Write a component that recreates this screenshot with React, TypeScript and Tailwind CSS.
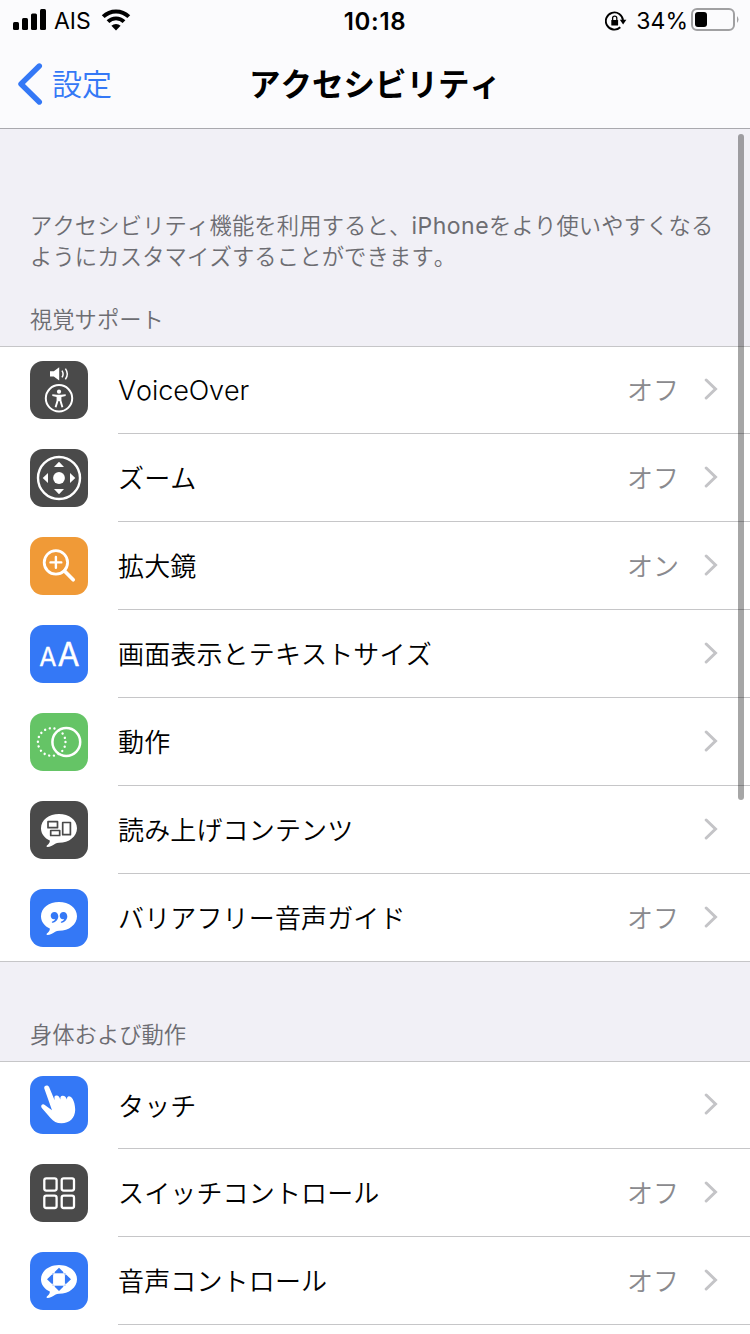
import type { ReactNode } from "react";

const BUBBLE =
  "M29 13C39 13 47 19 47 27.2S39 41.8 29 41.8C27.6 41.8 26.400 42 25.200 42.700C22.600 44.500 20 45.900 17.400 45.900C16.400 45.900 16.300 45.100 16.900 44.500C18.400 43 20.200 41.600 19.800 39.400C14.600 37.200 11 32.800 11 27.200C11 19 19 13 29 13Z";

const QUOTE =
  "M3.700 0C6.100 0 7.600 1.900 7.600 4.400C7.600 7.600 5.200 10.200 2 10.900C1 11.100 .8 10 1.700 9.600C3.200 9 4.200 8.100 4.500 7.100C1.900 7.900 0 6.100 0 3.800C0 1.600 1.700 0 3.700 0Z";

const icons: Record<string, ReactNode> = {
  voiceover: (
    <>
      <path d="M20 10.300h3.800l5.400-4v13.200l-5.400-4H20z" fill="#fff" />
      <path d="M32 9.600q2.200 3.400 0 6.800M35.400 7.600q3.800 5.400 0 10.800" stroke="#fff" strokeWidth="1.500" />
      <circle cx="29" cy="37.300" r="13.200" stroke="#fff" strokeWidth="2" />
      <circle cx="29" cy="30.700" r="2.100" fill="#fff" />
      <path d="M22.300 33.200l4.700.6h4l4.700-.6v1.900l-4.300.9v3.500l1.900 6.600-1.800.4-2-6.500h-1l-2 6.500-1.800-.4 1.900-6.600v-3.500l-4.300-.9z" fill="#fff" />
    </>
  ),
  zoom: (
    <>
      <circle cx="29" cy="29" r="21" stroke="#fff" strokeWidth="2.400" />
      <circle cx="29" cy="29" r="5.900" fill="#fff" />
      <path d="M29 12.700l5 5.300h-10zM29 45.300l5-5.300h-10zM12.700 29l5.300-5v10zM45.300 29l-5.300-5v10z" fill="#fff" />
    </>
  ),
  magnifier: (
    <g stroke="#fff" strokeLinecap="round">
      <circle cx="25.900" cy="25.400" r="11.700" strokeWidth="2.800" />
      <path d="M20.500 25.400h10.800M25.900 20v10.800" strokeWidth="2.400" />
      <path d="M34.500 34l8.700 8.700" strokeWidth="3.700" />
    </g>
  ),
  display: (
    <g fill="#fff" stroke="#fff" strokeWidth=".3" strokeLinejoin="round" fontFamily="Inter, sans-serif" fontWeight="400">
      <text x="9.300" y="40.800" fontSize="25">A</text>
      <text x="27.400" y="40.800" fontSize="32">A</text>
    </g>
  ),
  motion: (
    <>
      <circle cx="21.700" cy="29" r="13.800" stroke="#fff" strokeWidth="2.400" strokeLinecap="round" strokeDasharray="0.010 4.807" />
      <circle cx="36.300" cy="29" r="13.900" stroke="#fff" strokeWidth="2.500" />
    </>
  ),
  spoken: (
    <>
      <path d={BUBBLE} fill="#fff" />
      <g stroke="#4a4a4a" strokeWidth="1.700" strokeLinejoin="round">
        <rect x="18" y="20.700" width="9.500" height="6" />
        <rect x="20.700" y="29.500" width="9" height="5" />
        <rect x="32.700" y="21.500" width="7.700" height="12.200" />
      </g>
    </>
  ),
  audio: (
    <>
      <path d={BUBBLE} fill="#fff" />
      <g fill="#3478f6">
        <path d={QUOTE} transform="translate(20.700 22.900)" />
        <path d={QUOTE} transform="translate(29.700 22.900)" />
      </g>
    </>
  ),
  touch: (
    <path
      d="M14.300 12.500C13.400 9.300 18.100 8.200 19.200 11.200L24 22.800L24.600 24.200C24.400 21.400 24 19.800 26 19.600C28.400 19.300 29.300 20.600 30.300 23.400C30.300 21 30.700 19.800 32.500 19.700C35 19.600 35.900 21.300 37 23.500C37 21.700 37.200 20.500 38.700 20.200C43 19.600 45.300 28.500 45.200 34C45 42 39.500 47.300 31.500 47.300C26.500 47.300 23.500 45.600 20.500 42L11.600 31.700C10.200 29.600 12.600 27.200 14.800 28.900L22 34.200Z"
      fill="#fff"
    />
  ),
  switch: (
    <g stroke="#fff" strokeWidth="2.300">
      <rect x="14.300" y="14.300" width="12.300" height="12.300" rx="2" />
      <rect x="31.700" y="14.300" width="12.300" height="12.300" rx="2" />
      <rect x="14.300" y="31.700" width="12.300" height="12.300" rx="2" />
      <rect x="31.700" y="31.700" width="12.300" height="12.300" rx="2" />
    </g>
  ),
  voice: (
    <>
      <path d={BUBBLE} fill="#fff" />
      <path
        d="M29 15.700l4.300 4.200v1.300h2.100v2h-12.800v-2h2.100v-1.300zM29 39l4.300-4.200v-1.300h2.100v-1h-12.800v1h2.100v1.300zM17 27.300l4.700-4.500h1.600v9h-1.600zM41 27.300l-4.700-4.500h-1.600v9h1.600z"
        fill="#3478f6"
      />
      <rect x="23.300" y="21.300" width="11.400" height="12.400" fill="#fff" />
    </>
  ),
};

type Row = { icon: string; color: string; label: string; value?: string };

const vision: Row[] = [
  { icon: "voiceover", color: "bg-[#4a4a4a]", label: "VoiceOver", value: "オフ" },
  { icon: "zoom", color: "bg-[#4a4a4a]", label: "ズーム", value: "オフ" },
  { icon: "magnifier", color: "bg-[#f09a37]", label: "拡大鏡", value: "オン" },
  { icon: "display", color: "bg-[#3478f6]", label: "画面表示とテキストサイズ" },
  { icon: "motion", color: "bg-[#65c466]", label: "動作" },
  { icon: "spoken", color: "bg-[#4a4a4a]", label: "読み上げコンテンツ" },
  { icon: "audio", color: "bg-[#3478f6]", label: "バリアフリー音声ガイド", value: "オフ" },
];

const physical: Row[] = [
  { icon: "touch", color: "bg-[#3478f6]", label: "タッチ" },
  { icon: "switch", color: "bg-[#4a4a4a]", label: "スイッチコントロール", value: "オフ" },
  { icon: "voice", color: "bg-[#3478f6]", label: "音声コントロール", value: "オフ" },
];

function List({ rows, open }: { rows: Row[]; open?: boolean }) {
  return (
    <div className={`border-t border-[#c6c6c8] bg-white ${open ? "" : "border-b"}`}>
      {rows.map((row, i) => {
        const last = i === rows.length - 1 && !open;
        return (
          <div key={row.icon} className={`flex pl-[30px] ${i === 0 || last ? "h-[87px]" : "h-[88px]"}`}>
            <div className={`size-[58px] shrink-0 rounded-[13px] ${row.color} ${i === 0 ? "mt-[14px]" : "mt-[15px]"}`}>
              <svg viewBox="0 0 58 58" fill="none" className="size-full">
                {icons[row.icon]}
              </svg>
            </div>
            <div className={`ml-[30px] flex flex-1 items-center pr-[32px] ${last ? "" : "border-b border-[#c6c6c8]"}`}>
              <span
                className={`flex-1 whitespace-nowrap text-black ${
                  row.icon === "voiceover" ? "pt-[2px] text-[27px] tracking-[-0.1px]" : "pt-[2px] text-[26px] tracking-[0.15px]"
                }`}
              >
                {row.label}
              </span>
              {row.value && <span className="mr-[25px] pt-px text-[26px] text-[#8a8a8e]">{row.value}</span>}
              <svg viewBox="0 0 14 22" fill="none" className="mb-[2px] h-[22px] w-[14px]">
                <path d="M2.200 2l9.300 9-9.300 9" stroke="#c4c4c7" strokeWidth="3" strokeLinecap="round" />
              </svg>
            </div>
          </div>
        );
      })}
    </div>
  );
}

function StatusBar() {
  return (
    <div className="grid h-10 grid-cols-3 items-center text-[23px] leading-none text-black">
      <div className="flex items-center pl-[13px]">
        <svg viewBox="0 0 34 22" className="h-[22px] w-[34px]">
          <rect x="0" y="13" width="6" height="8" rx="1.500" />
          <rect x="9" y="9" width="6" height="12" rx="1.500" />
          <rect x="18" y="4.500" width="6" height="16.500" rx="1.500" />
          <rect x="27" y="0" width="6" height="21" rx="1.500" />
        </svg>
        <span className="ml-[7px] pt-[2px]">AIS</span>
        <svg viewBox="0 0 30 22" fill="none" className="ml-[10px] h-[22px] w-[30px]">
          <path d="M2.200 7.700a18.200 18.200 0 0 1 25.600 0" stroke="#000" strokeWidth="4" />
          <path d="M7 12.600a11.300 11.300 0 0 1 16 0" stroke="#000" strokeWidth="3.800" />
          <path d="M15 21.500l-4.600-4.700a6.500 6.500 0 0 1 9.200 0z" fill="#000" />
        </svg>
      </div>
      <div className="pt-[3px] text-center text-[24px] font-semibold tracking-[0.7px]">10:18</div>
      <div className="flex items-center justify-end pr-[11px]">
        <svg viewBox="0 0 22 20" fill="none" className="mt-px h-5 w-[22px]">
          <path d="M15.300 16.300a8.600 8.600 0 1 1 2.700-6.800" stroke="#000" strokeWidth="1.900" />
          <path d="M14.800 8.800h6.600l-3.300 4.600z" fill="#000" />
          <rect x="6.300" y="9" width="6.800" height="5.600" rx=".6" fill="#000" />
          <path d="M7.600 9.500V7.300a2.100 2.100 0 0 1 4.200 0v2.200" stroke="#000" strokeWidth="1.300" />
        </svg>
        <span className="ml-[9px] pt-[2px]">34%</span>
        <svg viewBox="0 0 48 24" fill="none" className="ml-[3px] h-6 w-12">
          <rect x="1" y="1" width="42" height="21" rx="5" stroke="#a0a0a2" strokeWidth="2" />
          <rect x="4" y="4" width="12" height="15" rx="3" fill="#000" />
          <path d="M46 8q3 3.500 0 7z" fill="#a0a0a2" />
        </svg>
      </div>
    </div>
  );
}

export default function App() {
  return (
    <div className="relative h-[1334px] w-[750px] overflow-hidden bg-[#f1f0f6] font-['Inter','Noto_Sans_CJK_JP',sans-serif] font-[350] [font-kerning:none]">
      <header className="h-[129px] border-b border-[#a9a9ae] bg-[#fbfbfd]">
        <div className="font-normal">
          <StatusBar />
        </div>
        <div className="grid h-[88px] grid-cols-[1fr_auto_1fr] items-center">
          <div className="flex items-center pl-[17px] text-[#3478f6]">
            <svg viewBox="0 0 26 42" fill="none" className="h-[42px] w-[26px]">
              <path d="M22.300 3L4 21l18.300 18" stroke="currentColor" strokeWidth="5.400" strokeLinecap="round" strokeLinejoin="round" />
            </svg>
            <span className="ml-[9px] pt-px text-[30px]">設定</span>
          </div>
          <h1 className="pt-[2px] text-[31.500px] font-bold text-black">アクセシビリティ</h1>
        </div>
      </header>

      <div className="px-[30px] pt-[81px] text-[22.300px] leading-[31px] text-[#6d6d72]">
        <p className="whitespace-nowrap tracking-[0.14px]">
          アクセシビリティ機能を利用すると、
          <span className="text-[23px] leading-none font-normal tracking-[0.5px]">iPhone</span>をより使いやすくなる
          <br />
          ようにカスタマイズすることができます。
        </p>
        <h2 className="mt-8 h-[42px]">視覚サポート</h2>
      </div>
      <List rows={vision} />

      <h2 className="h-[99px] px-[30px] pt-[57px] text-[22.300px] leading-[31px] text-[#6d6d72]">身体および動作</h2>
      <List rows={physical} open />
      <div className="h-10 bg-white" />

      {/* scroll indicator */}
      <div className="absolute top-[134px] right-[6px] h-[666px] w-[6px] rounded-full bg-black/35" />
    </div>
  );
}
